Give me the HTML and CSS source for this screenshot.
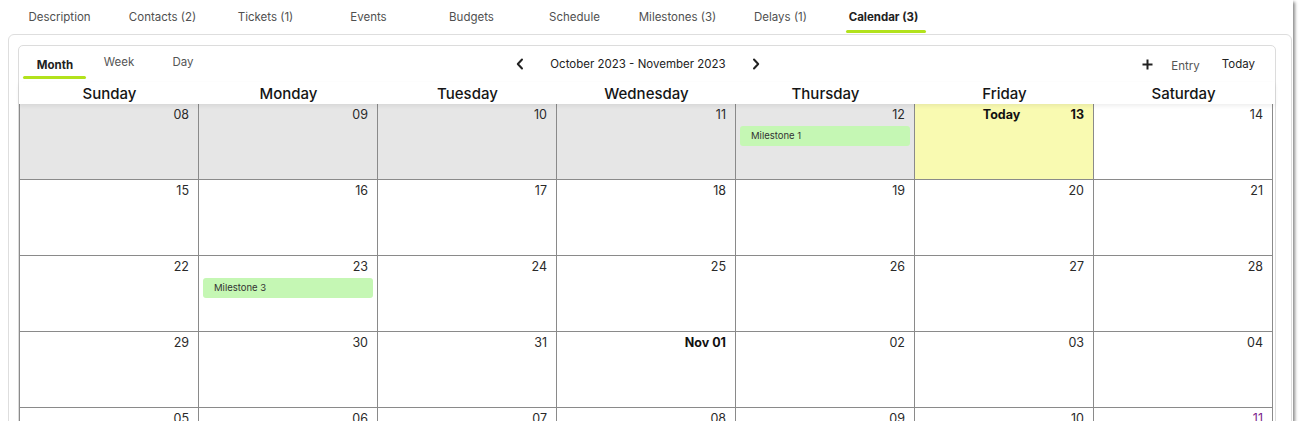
FILE: index.html
```html
<!DOCTYPE html>
<html lang="en">
<head>
<meta charset="utf-8">
<title>Calendar</title>
<link rel="stylesheet" href="styles.css">
</head>
<body>
<div class="screen">
  <nav class="tabs">
    <a class="tab">Description</a>
    <a class="tab">Contacts (2)</a>
    <a class="tab">Tickets (1)</a>
    <a class="tab">Events</a>
    <a class="tab">Budgets</a>
    <a class="tab">Schedule</a>
    <a class="tab">Milestones (3)</a>
    <a class="tab">Delays (1)</a>
    <a class="tab active">Calendar (3)</a>
  </nav>
  <section class="panel">
    <div class="calendar">
      <div class="toolbar">
        <div class="views">
          <span class="view active">Month</span>
          <span class="view">Week</span>
          <span class="view">Day</span>
        </div>
        <div class="range">
          <svg class="chev" width="8" height="12" viewBox="0 0 8 12"><polyline points="6,1.5 1.8,6 6,10.5" fill="none" stroke="#222" stroke-width="2" stroke-linecap="round" stroke-linejoin="round"/></svg>
          <span class="range-label">October 2023 - November 2023</span>
          <svg class="chev" width="8" height="12" viewBox="0 0 8 12"><polyline points="2,1.5 6.2,6 2,10.5" fill="none" stroke="#222" stroke-width="2" stroke-linecap="round" stroke-linejoin="round"/></svg>
        </div>
        <div class="actions">
          <svg class="plus" width="11" height="11" viewBox="0 0 11 11"><path d="M5.5 0.5v10M0.5 5.5h10" stroke="#222" stroke-width="2"/></svg>
          <span class="entry">Entry</span>
          <span class="today-btn">Today</span>
        </div>
      </div>
      <div class="weekdays">
        <div>Sunday</div><div>Monday</div><div>Tuesday</div><div>Wednesday</div><div>Thursday</div><div>Friday</div><div>Saturday</div>
      </div>
      <div class="grid">
        <div class="cell past"><div class="num">08</div></div>
        <div class="cell past"><div class="num">09</div></div>
        <div class="cell past"><div class="num">10</div></div>
        <div class="cell past"><div class="num">11</div></div>
        <div class="cell past"><div class="num">12</div><div class="event">Milestone 1</div></div>
        <div class="cell today"><div class="num today-head"><span class="sp"></span><span class="today-label">Today</span><span class="today-num">13</span></div></div>
        <div class="cell"><div class="num">14</div></div>

        <div class="cell"><div class="num">15</div></div>
        <div class="cell"><div class="num">16</div></div>
        <div class="cell"><div class="num">17</div></div>
        <div class="cell"><div class="num">18</div></div>
        <div class="cell"><div class="num">19</div></div>
        <div class="cell"><div class="num">20</div></div>
        <div class="cell"><div class="num">21</div></div>

        <div class="cell"><div class="num">22</div></div>
        <div class="cell"><div class="num">23</div><div class="event">Milestone 3</div></div>
        <div class="cell"><div class="num">24</div></div>
        <div class="cell"><div class="num">25</div></div>
        <div class="cell"><div class="num">26</div></div>
        <div class="cell"><div class="num">27</div></div>
        <div class="cell"><div class="num">28</div></div>

        <div class="cell"><div class="num">29</div></div>
        <div class="cell"><div class="num">30</div></div>
        <div class="cell"><div class="num">31</div></div>
        <div class="cell"><div class="num bold">Nov 01</div></div>
        <div class="cell"><div class="num">02</div></div>
        <div class="cell"><div class="num">03</div></div>
        <div class="cell"><div class="num">04</div></div>

        <div class="cell"><div class="num">05</div></div>
        <div class="cell"><div class="num">06</div></div>
        <div class="cell"><div class="num">07</div></div>
        <div class="cell"><div class="num">08</div></div>
        <div class="cell"><div class="num">09</div></div>
        <div class="cell"><div class="num">10</div></div>
        <div class="cell"><div class="num holiday">11</div></div>
      </div>
    </div>
  </section>
</div>
</body>
</html>
```

FILE: styles.css
```css
* { box-sizing: border-box; }

body {
  margin: 0;
  background: #fff;
  font-family: Inter, "Open Sans", sans-serif;
  color: #222;
}

.screen {
  width: 1293px;
  height: 421px;
  overflow: hidden;
  background: #fff;
  box-shadow: 2px 2px 3px rgba(0, 0, 0, 0.45);
}

/* top tabs */
.tabs {
  display: flex;
  height: 34px;
  padding-left: 8px;
}

.tab {
  position: relative;
  width: 103px;
  text-align: center;
  font-size: 11.5px;
  line-height: 34px;
  color: #505050;
}

.tab.active {
  font-weight: 700;
  color: #222;
}

.tab.active::after {
  content: "";
  position: absolute;
  left: 14px;
  width: 80px;
  top: 30px;
  height: 3px;
  border-radius: 2px;
  background: #b2e21c;
}

/* outer panel */
.panel {
  margin-left: 8px;
  width: 1284px;
  height: 420px;
  border: 1px solid #dedede;
  border-radius: 6px;
  padding: 10px 15px 0 9px;
}

.calendar {
  border: 1px solid #dcdcdc;
  border-radius: 5px;
  height: 400px;
}

/* toolbar */
.toolbar {
  display: grid;
  grid-template-columns: 1fr auto 1fr;
  align-items: center;
  height: 36px;
  padding: 0 20px 0 4px;
}

.views {
  display: flex;
  align-self: stretch;
}

.view {
  position: relative;
  width: 64px;
  text-align: center;
  font-size: 11.5px;
  line-height: 16px;
  padding-top: 8px;
  color: #555;
}

.view.active {
  padding-top: 11px;
  font-weight: 700;
  color: #222;
}

.view.active::after {
  content: "";
  position: absolute;
  left: 0;
  width: 63px;
  top: 30px;
  height: 3px;
  border-radius: 2px;
  background: #b2e21c;
}

.range {
  display: flex;
  align-items: center;
  gap: 26px;
  margin-right: 2px;
}

.range-label {
  font-size: 11.5px;
  color: #222;
}

.chev { display: block; }

.actions {
  justify-self: end;
  display: flex;
  align-items: center;
}

.plus {
  display: block;
  margin-right: 18px;
}

.entry {
  font-size: 11.5px;
  color: #555;
  padding-top: 3px;
  margin-right: 22px;
}

.today-btn {
  font-size: 11.5px;
  color: #222;
}

/* weekday header */
.weekdays {
  position: relative;
  z-index: 1;
  display: grid;
  grid-template-columns: repeat(7, 179px);
  padding: 1px 0 0 1px;
  height: 22px;
  line-height: 21px;
  font-size: 15px;
  font-weight: 500;
  color: #151515;
  text-align: center;
  box-shadow: 0 2px 4px rgba(0, 0, 0, 0.07);
}

/* month grid */
.grid {
  display: grid;
  grid-template-columns: repeat(7, 179px);
  width: 1254px;
  border-left: 1px solid #8a8a8a;
}

.cell {
  height: 76px;
  border-right: 1px solid #8a8a8a;
  border-bottom: 1px solid #8a8a8a;
  padding: 2px 3px 0 4px;
  background: #fff;
}

.cell.past { background: #e6e6e6; }
.cell.today { background: #f9fab1; }

.num {
  text-align: right;
  font-size: 12.5px;
  line-height: 17px;
  padding-right: 6px;
  color: #2a2a2a;
}

.num.bold { font-weight: 700; color: #111; }
.num.holiday { color: #7d1f8c; }

.today-head {
  display: flex;
  font-weight: 700;
  color: #111;
}

.today-head .sp,
.today-head .today-num {
  flex: 1 1 0;
}

.today-head .today-num { text-align: right; }

.event {
  margin-top: 3px;
  margin-right: 1px;
  height: 20px;
  line-height: 20px;
  padding-left: 11px;
  border-radius: 3px;
  background: #c5f7b4;
  font-size: 9.5px;
  color: #333;
}
```
